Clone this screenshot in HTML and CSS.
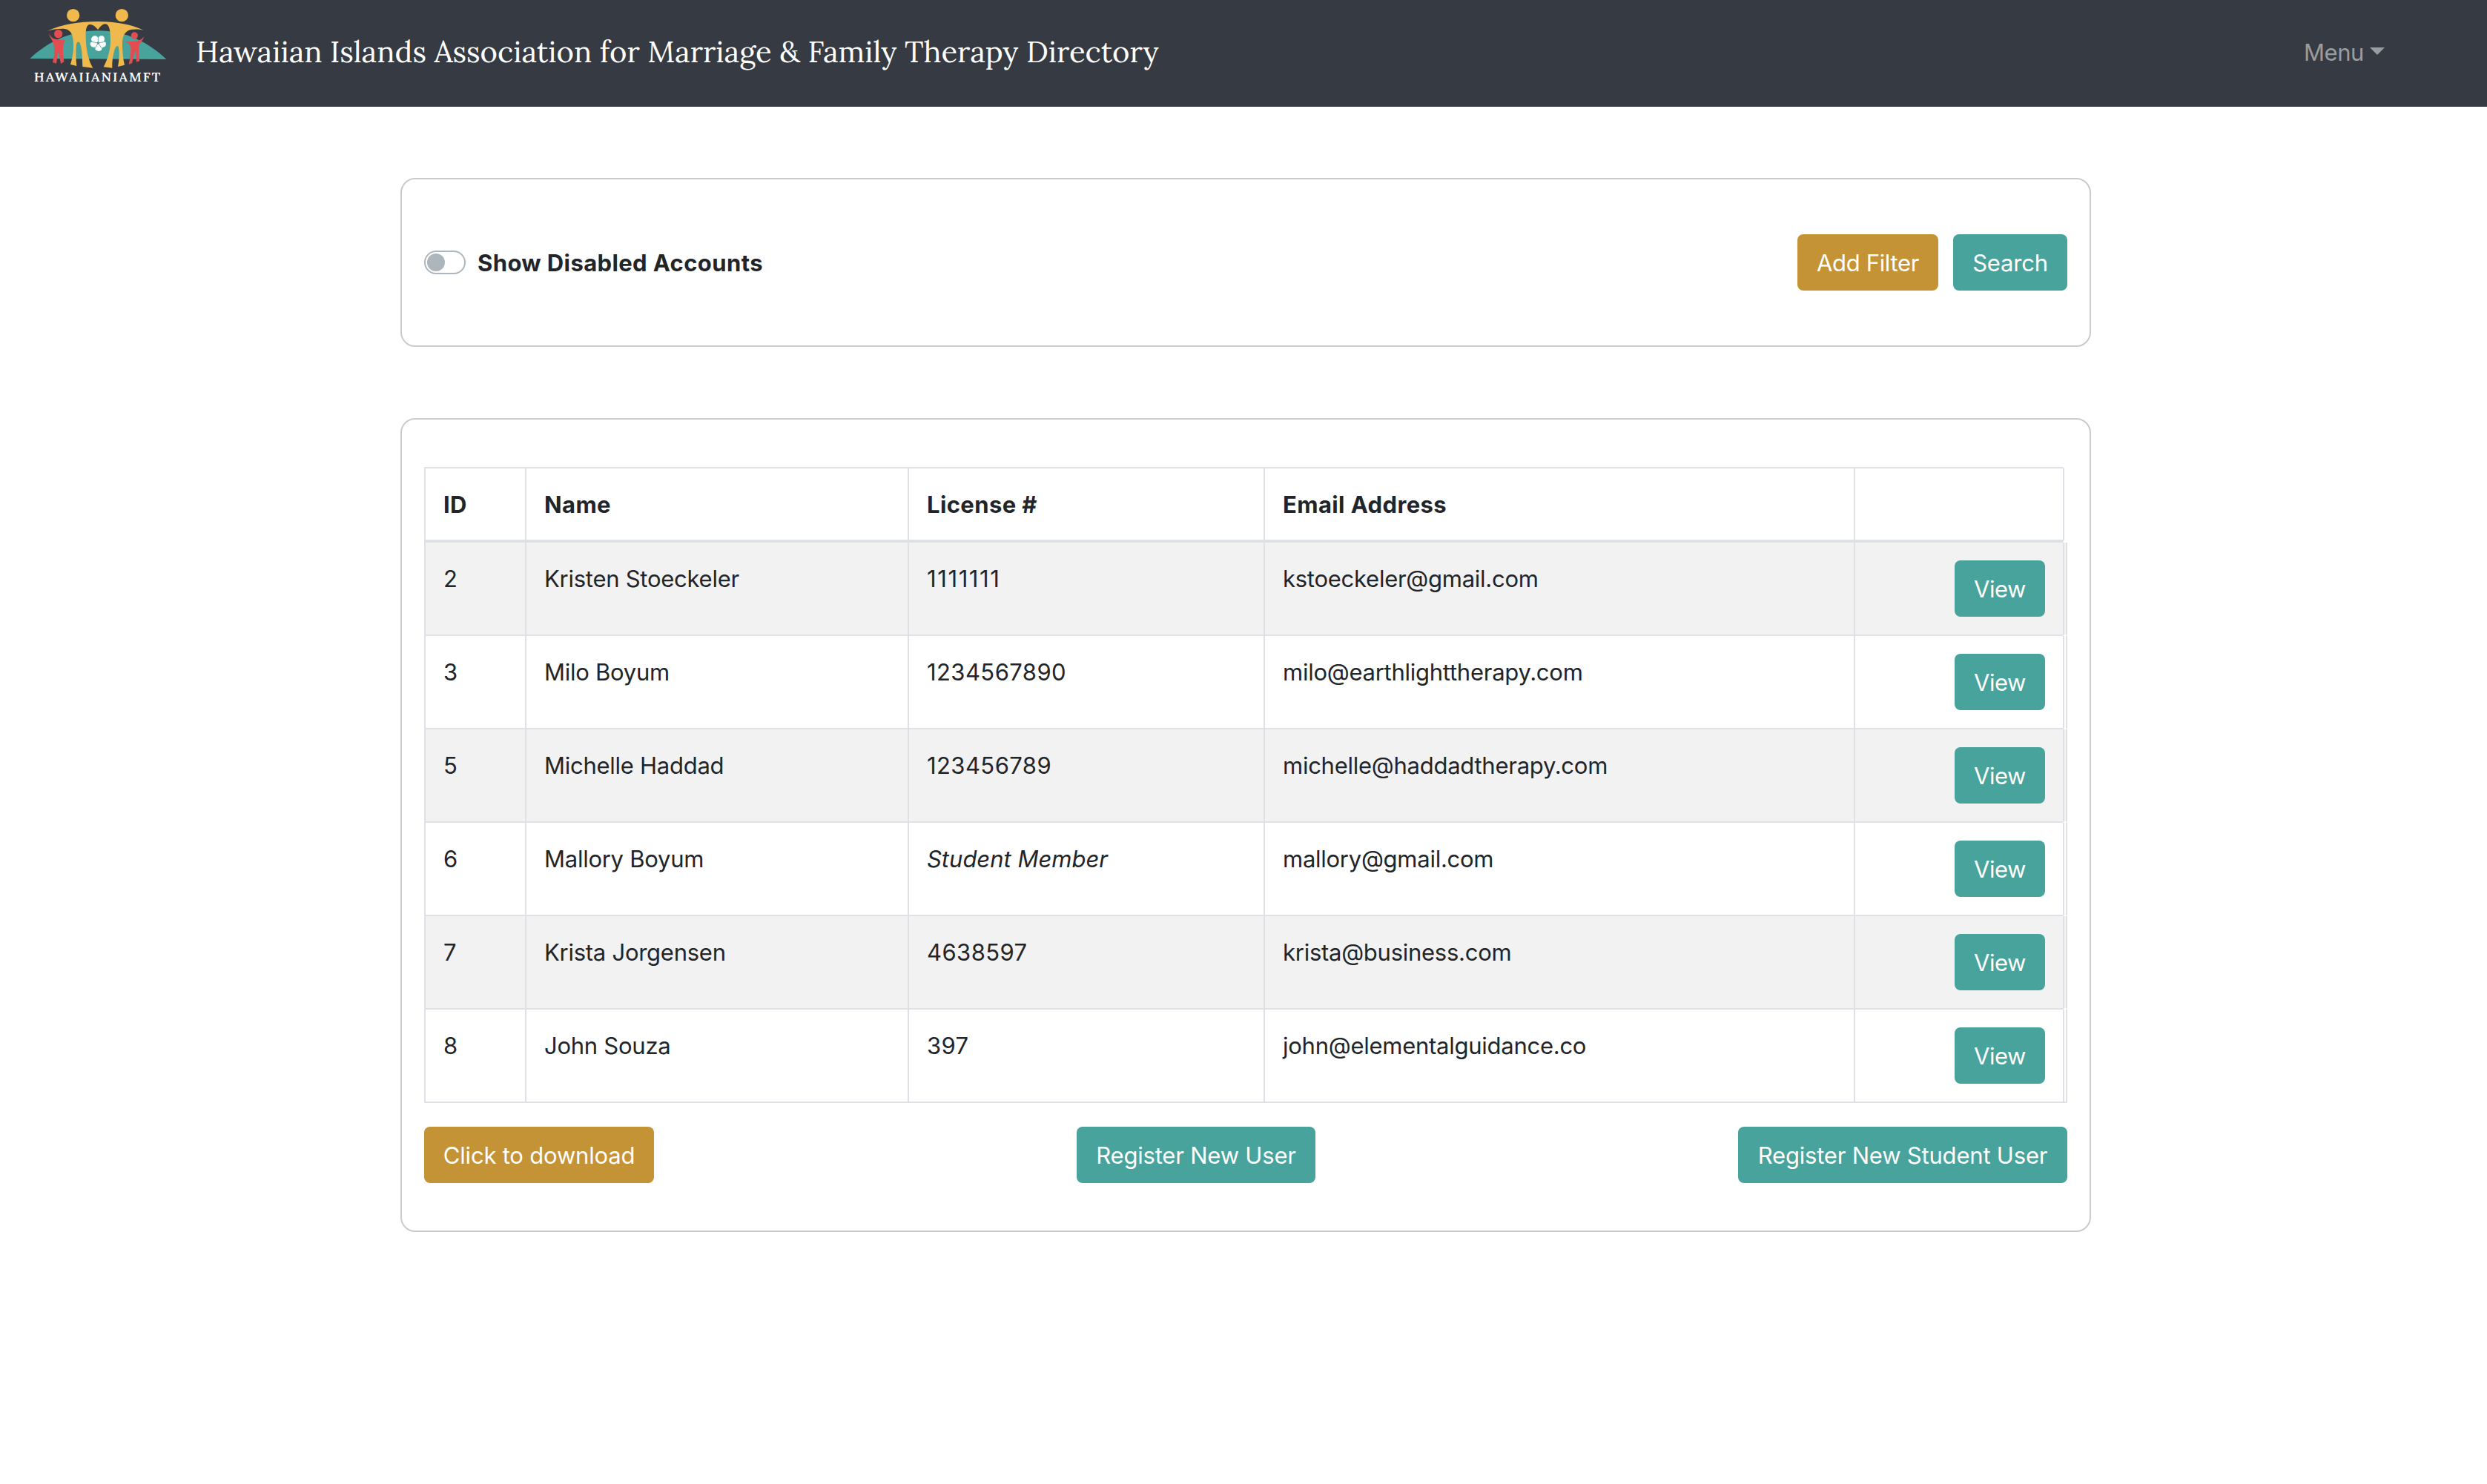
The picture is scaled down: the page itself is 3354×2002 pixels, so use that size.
FILE: index.html
```html
<!DOCTYPE html>
<html lang="en">
<head>
<meta charset="utf-8">
<title>Hawaiian Islands Association for Marriage &amp; Family Therapy Directory</title>
<link rel="stylesheet" href="styles.css">
</head>
<body>
<nav class="navbar">
  <a class="brand">
    <svg class="logo" viewBox="0 0 660 420" role="img" aria-label="HAWAIIANIAMFT">
      <path fill="#47a39b" d="M61 237C130 172 222 124 336 124S542 173 613 240Z"/>
      <g fill="#f0b94d">
        <circle cx="236" cy="62" r="26"/>
        <circle cx="433" cy="62" r="26"/>
        <path d="M131 125C190 99 260 87 335 87S470 99 521 122C500 118 470 116 455 126C438 138 434 160 435 185C436 215 438 240 444 263L417 270C423 240 425 205 418 187C414 183 408 188 404 200C396 225 393 250 394 275L359 271C375 240 387 205 387 165C387 130 384 98 366 97C352 98 345 110 336 120C327 110 318 98 303 99C288 100 286 125 287 155C289 205 298 245 316 275L274 270C273 235 272 190 262 172C256 167 251 169 249 180C246 210 247 240 250 267L225 261C236 225 240 190 235 155C231 130 220 121 203 117C180 115 155 119 131 125Z"/>
      </g>
      <g fill="#e34d51">
        <circle cx="176" cy="137" r="17"/>
        <path d="M137 134C145 147 152 157 166 158C178 161 190 163 203 161C195 180 194 195 195 215L199 250L186 258L178 216H174L168 257L153 252C160 230 161 205 158 185C156 165 143 155 137 134Z"/>
        <circle cx="484" cy="144" r="14"/>
        <path d="M523 146C515 157 508 163 495 165C480 168 462 169 446 168C458 174 468 180 469 192C470 215 466 238 461 260L474 256L486 209H490L492 251L505 247C502 225 500 205 502 188C505 171 519 166 523 146Z"/>
      </g>
      <g fill="#fff">
        <ellipse cx="324" cy="159" rx="15" ry="14"/>
        <ellipse cx="350" cy="158" rx="13" ry="13"/>
        <ellipse cx="320" cy="178" rx="15" ry="13"/>
        <ellipse cx="355" cy="178" rx="14" ry="13"/>
        <ellipse cx="339" cy="192" rx="16" ry="15"/>
        <circle cx="337" cy="174" r="14"/>
      </g>
      <path fill="none" stroke="#47a39b" stroke-width="2.5" d="M337 174L337 144M337 174L304 168M337 174L322 200M337 174L355 200M337 174L370 168"/>
      <path fill="none" stroke="#fff" stroke-width="4" d="M344 168L357 146M349 154L360 151"/>
      <circle cx="337" cy="174" r="5" fill="#47a39b"/>
      <text class="logo-text" x="77" y="329" textLength="511">HAWAIIANIAMFT</text>
    </svg>
    <span class="brand-name">Hawaiian Islands Association for Marriage &amp; Family Therapy Directory</span>
  </a>
  <a class="menu">Menu<span class="caret"></span></a>
</nav>

<main class="container">
  <section class="card filters">
    <label class="switch"><span class="track"><span class="knob"></span></span>Show Disabled Accounts</label>
    <div class="actions">
      <button class="btn btn-gold w-filter">Add Filter</button>
      <button class="btn w-search">Search</button>
    </div>
  </section>

  <section class="card">
    <table class="accounts">
      <colgroup><col class="c-id"><col class="c-name"><col class="c-license"><col class="c-email"><col class="c-view"><col class="c-end"></colgroup>
      <thead>
        <tr><th>ID</th><th>Name</th><th>License #</th><th>Email Address</th><th></th><th class="end"></th></tr>
      </thead>
      <tbody>
        <tr><td>2</td><td>Kristen Stoeckeler</td><td class="ones">1111111</td><td>kstoeckeler@gmail.com</td><td class="view"><button class="btn w-view">View</button></td><td class="end"></td></tr>
        <tr><td>3</td><td>Milo Boyum</td><td class="num">1234567890</td><td>milo@earthlighttherapy.com</td><td class="view"><button class="btn w-view">View</button></td><td class="end"></td></tr>
        <tr><td>5</td><td>Michelle Haddad</td><td class="num">123456789</td><td>michelle@haddadtherapy.com</td><td class="view"><button class="btn w-view">View</button></td><td class="end"></td></tr>
        <tr><td>6</td><td>Mallory Boyum</td><td class="student">Student Member</td><td>mallory@gmail.com</td><td class="view"><button class="btn w-view">View</button></td><td class="end"></td></tr>
        <tr><td>7</td><td>Krista Jorgensen</td><td class="num">4638597</td><td>krista@business.com</td><td class="view"><button class="btn w-view">View</button></td><td class="end"></td></tr>
        <tr><td>8</td><td>John Souza</td><td class="num">397</td><td>john@elementalguidance.co</td><td class="view"><button class="btn w-view">View</button></td><td class="end"></td></tr>
      </tbody>
    </table>
    <div class="footer">
      <button class="btn btn-gold w-download">Click to download</button>
      <button class="btn w-user">Register New User</button>
      <button class="btn w-student">Register New Student User</button>
    </div>
  </section>
</main>
</body>
</html>
```
FILE: styles.css
```css
* { box-sizing: border-box; }

body {
  margin: 0;
  background: #fff;
  color: #212529;
  font: 31px/48px Inter, "Liberation Sans", sans-serif;
  letter-spacing: -0.26px;
}

.navbar {
  display: flex;
  justify-content: space-between;
  height: 144px;
  padding: 0 138px 4px 20px;
  background: #363a42;
}

.brand {
  display: flex;
  align-items: center;
  gap: 24px;
}

.logo {
  display: block;
  width: 220px;
  height: 140px;
}

.logo-text {
  fill: #fff;
  font: 600 53px Lora, "Liberation Serif", serif;
}

.brand-name {
  color: #fff;
  font: 40px/60px Lora, "Liberation Serif", serif;
  letter-spacing: 0;
  white-space: nowrap;
}

.menu {
  display: flex;
  align-items: center;
  gap: 8px;
  padding-top: 1px;
  color: #9a9da0;
  letter-spacing: -0.4px;
}

.caret {
  margin-top: -3px;
  border-top: 10px solid;
  border-left: 10px solid transparent;
  border-right: 10px solid transparent;
}

.container {
  display: flex;
  flex-direction: column;
  gap: 96px;
  width: 2280px;
  margin: 96px 0 0 540px;
}

.card {
  padding: 64px 30px;
  border: 2px solid #cbcbcb;
  border-radius: 20px;
}

.filters {
  display: flex;
  align-items: center;
  justify-content: space-between;
  height: 228px;
  padding-block: 0;
}

.switch {
  display: flex;
  align-items: center;
  gap: 16px;
  padding-top: 1px;
  font-weight: 700;
  letter-spacing: 0.39px;
}

.track {
  width: 56px;
  height: 32px;
  margin-top: -1px;
  padding: 2px;
  border: 2px solid #adb5bd;
  border-radius: 16px;
}

.knob {
  display: block;
  width: 24px;
  height: 24px;
  border-radius: 50%;
  background: #adb5bd;
}

.actions {
  display: flex;
  gap: 20px;
}

.btn {
  display: block;
  height: 76px;
  padding: 15px 0 13px;
  border: 0;
  border-radius: 8px;
  background: #47a39b;
  color: #fff;
  font: inherit;
  letter-spacing: -0.2px;
  text-align: center;
  white-space: nowrap;
}

.btn-gold { background: #c49336; }
.w-filter { width: 190px; letter-spacing: -0.34px; }
.w-search { width: 154px; }
.w-view { width: 122px; letter-spacing: -0.4px; }
.w-download { width: 310px; }
.w-user { width: 322px; }
.w-student { width: 444px; }

.accounts {
  width: 2216px;
  border-collapse: separate;
  border-spacing: 0;
  table-layout: fixed;
}

.c-id { width: 136px; }
.c-name { width: 516px; }
.c-license { width: 480px; }
.c-email { width: 796px; }
.c-view { width: 282px; }
.c-end { width: 6px; }

th,
td {
  padding: 25px 24px 23px;
  border-left: 2px solid #dee2e6;
  text-align: left;
  vertical-align: top;
}

th {
  height: 102px;
  border-top: 2px solid #dee2e6;
  border-bottom: 4px solid #dee2e6;
  font-weight: 700;
  letter-spacing: 0.4px;
}

td {
  height: 126px;
  border-bottom: 2px solid #dee2e6;
}

tbody tr:nth-child(odd) td {
  background: #f2f2f2;
  background-clip: padding-box;
}

.num { letter-spacing: 0.42px; }
.ones { letter-spacing: 1.6px; }
.student { font-style: italic; letter-spacing: 0; }

.view { padding: 24px 24px 24px 0; }
.view .btn { margin-left: auto; }

.end { padding: 0; }

th.end {
  border-top-color: transparent;
  border-bottom-color: transparent;
}

td.end {
  border-right: 2px solid #dee2e6;
  border-bottom-color: transparent;
}

tbody tr:last-child td.end { border-bottom-color: #dee2e6; }

.footer {
  display: flex;
  justify-content: space-between;
  margin-top: 32px;
}
```
